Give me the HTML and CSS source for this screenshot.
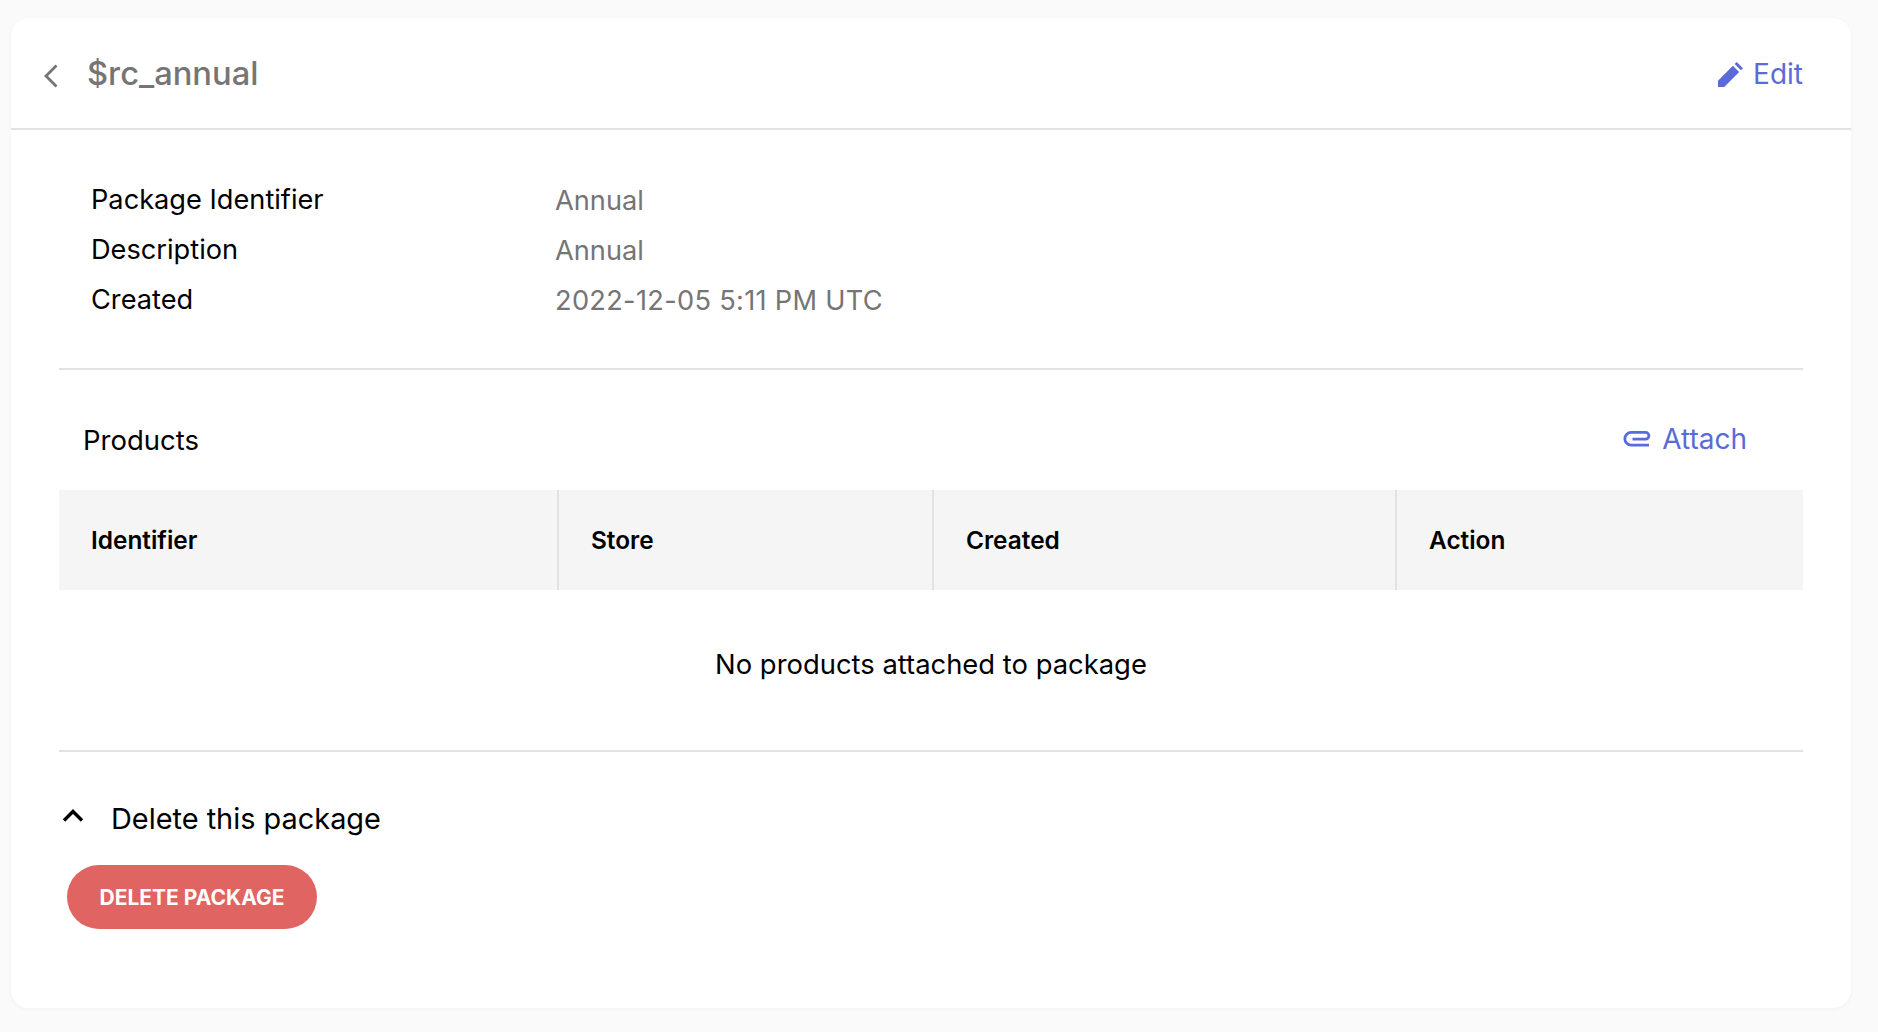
FILE: index.html
```html
<!DOCTYPE html>
<html lang="en">
<head>
<meta charset="utf-8">
<title>$rc_annual</title>
<link rel="stylesheet" href="styles.css">
</head>
<body>
<main class="card">
  <header class="head">
    <div class="head-left">
      <svg class="back" viewBox="0 0 16 24" width="16" height="24"><path d="M13.500 1.500 3 12l10.500 10.500" fill="none" stroke="#757575" stroke-width="2.800"/></svg>
      <h1 class="title">$rc_annual</h1>
    </div>
    <a class="link edit">
      <svg viewBox="0 0 26 26" width="25" height="25"><path fill="#5a6bd8" d="M0 26v-6.500L15.500 4l6.500 6.500L6.500 26zM17.300 2.200 19.500 0 26 6.500l-2.200 2.200z"/></svg>
      <span>Edit</span>
    </a>
  </header>
  <div class="body">
    <dl class="info">
      <dt>Package Identifier</dt><dd>Annual</dd>
      <dt>Description</dt><dd>Annual</dd>
      <dt>Created</dt><dd class="num">2022-12-05 5:11 PM UTC</dd>
    </dl>
    <section class="products">
      <div class="products-head">
        <h2 class="products-title">Products</h2>
        <a class="link attach">
          <svg viewBox="0 0 28 16" width="28" height="16"><path fill="none" stroke="#5a6bd8" stroke-width="2.800" d="M26 14.200H8.250a6.400 6.400 0 0 1 0-12.800H22.500a3.400 3.400 0 0 1 0 6.800H9.500"/></svg>
          <span>Attach</span>
        </a>
      </div>
      <div class="thead">
        <div class="th">Identifier</div>
        <div class="th">Store</div>
        <div class="th">Created</div>
        <div class="th">Action</div>
      </div>
      <p class="empty">No products attached to package</p>
    </section>
    <section class="danger">
      <div class="danger-head">
        <svg class="chevron" viewBox="0 0 22 14" width="22" height="14"><path d="M2 12.500 11 3.500l9 9" fill="none" stroke="#000" stroke-width="3.400"/></svg>
        <span>Delete this package</span>
      </div>
      <button class="delete">DELETE PACKAGE</button>
    </section>
  </div>
</main>
</body>
</html>
```
FILE: styles.css
```css
* { box-sizing: border-box; }
html, body { margin: 0; height: 100%; }
body {
  background: #fafafa;
  font-family: Inter, "Liberation Sans", sans-serif;
  color: #000;
  padding: 18px 27px 24px 11px;
}
.card {
  height: 990px;
  background: #fff;
  border-radius: 18px;
  box-shadow: 0 1px 4px rgba(0,0,0,.04);
  display: flex;
  flex-direction: column;
}
.head {
  height: 112px;
  flex: none;
  border-bottom: 2px solid #e2e2e2;
  display: flex;
  align-items: center;
  justify-content: space-between;
  padding: 0 48px 0 32px;
}
.head-left { display: flex; align-items: center; gap: 28px; }
.title { margin: -1px 0 0; font-size: 32.700px; line-height: 40px; font-weight: 500; color: #757575; }
.back { margin-top: 5px; }
.link { display: flex; align-items: center; color: #5a6bd8; font-size: 28px; }
.edit { gap: 10px; margin-top: 2px; }
.attach { gap: 11px; margin-top: -2px; }
.body { padding: 0 48px; flex: 1; }
.info {
  margin: 0;
  padding: 45px 32px 43px;
  border-bottom: 2px solid #e2e2e2;
  display: grid;
  grid-template-columns: 464px 1fr;
  grid-auto-rows: 50px;
  align-items: center;
  font-size: 27.200px;
}
.info dt { color: #000; margin-top: -1px; }
.info dd { margin: 0; color: #757575; }
.info .num { letter-spacing: 0.300px; }
.products-head {
  height: 120px;
  display: flex;
  align-items: center;
  justify-content: space-between;
  padding: 20px 56px 0 24px;
}
.products-title { margin: 0; font-size: 27.500px; font-weight: 400; }
.thead {
  display: grid;
  grid-template-columns: 498px 375px 463px 1fr;
  height: 100px;
  background: #f5f5f5;
}
.th {
  display: flex;
  align-items: center;
  padding-left: 32px;
  font-size: 24.400px;
  font-weight: 600;
  border-left: 2px solid #e2e2e2;
}
.th:first-child { border-left: 0; }
.empty {
  margin: 0;
  height: 162px;
  padding-bottom: 12px;
  border-bottom: 2px solid #e2e2e2;
  display: flex;
  align-items: center;
  justify-content: center;
  font-size: 27.400px;
}
.danger { padding-top: 46px; }
.danger-head { display: flex; align-items: center; gap: 27px; padding-left: 3px; font-size: 28.900px; height: 40px; }
.chevron { margin-top: -6px; }
.delete {
  display: block;
  margin: 27px 0 0 8px;
  width: 250px;
  height: 64px;
  border: 0;
  border-radius: 32px;
  background: #e06462;
  color: #fff;
  font-family: inherit;
  font-size: 21px;
  font-weight: 700;
}
```
